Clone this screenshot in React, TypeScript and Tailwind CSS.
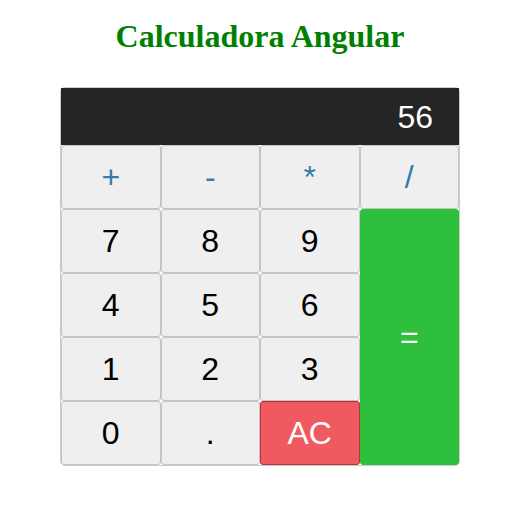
const keys = [
  { label: "+", kind: "op" },
  { label: "-", kind: "op" },
  { label: "*", kind: "op" },
  { label: "/", kind: "op" },
  { label: "7" },
  { label: "8" },
  { label: "9" },
  { label: "=", kind: "equal" },
  { label: "4" },
  { label: "5" },
  { label: "6" },
  { label: "1" },
  { label: "2" },
  { label: "3" },
  { label: "0" },
  { label: "." },
  { label: "AC", kind: "clear" },
];

function keyClass(kind?: string) {
  if (kind === "op") return "bg-[#efefef] border-[#c4c4c4] text-[#337cac]";
  if (kind === "equal")
    return "bg-[#2ebf3c] border-[#2ebf3c] text-white row-span-4 col-start-4 row-start-2";
  if (kind === "clear") return "bg-[#f0595f] border-[#b0353a] text-white";
  return "bg-[#efefef] border-[#c4c4c4] text-black";
}

export default function App() {
  return (
    <div className="w-[520px] min-h-[531px] bg-white font-['Liberation_Sans',Arial,sans-serif]">
      <h1 className="pt-[20px] text-center font-['Liberation_Serif','Times_New_Roman',serif] text-[32px] leading-[32px] font-bold text-[#008000]">
        Calculadora Angular
      </h1>
      <div className="mx-auto mt-[35px] w-[400px] rounded-[5px] border border-[#ccc]">
        <div className="flex h-[57px] items-center justify-end bg-[#252525] pr-[26px] text-[32px] text-white">
          56
        </div>
        <div className="grid grid-cols-4 auto-rows-[64px]">
          {keys.map((k) => (
            <button
              key={k.label}
              className={`flex items-center justify-center rounded-[3px] border text-[32px] ${keyClass(k.kind)}`}
            >
              {k.label}
            </button>
          ))}
        </div>
      </div>
    </div>
  );
}
